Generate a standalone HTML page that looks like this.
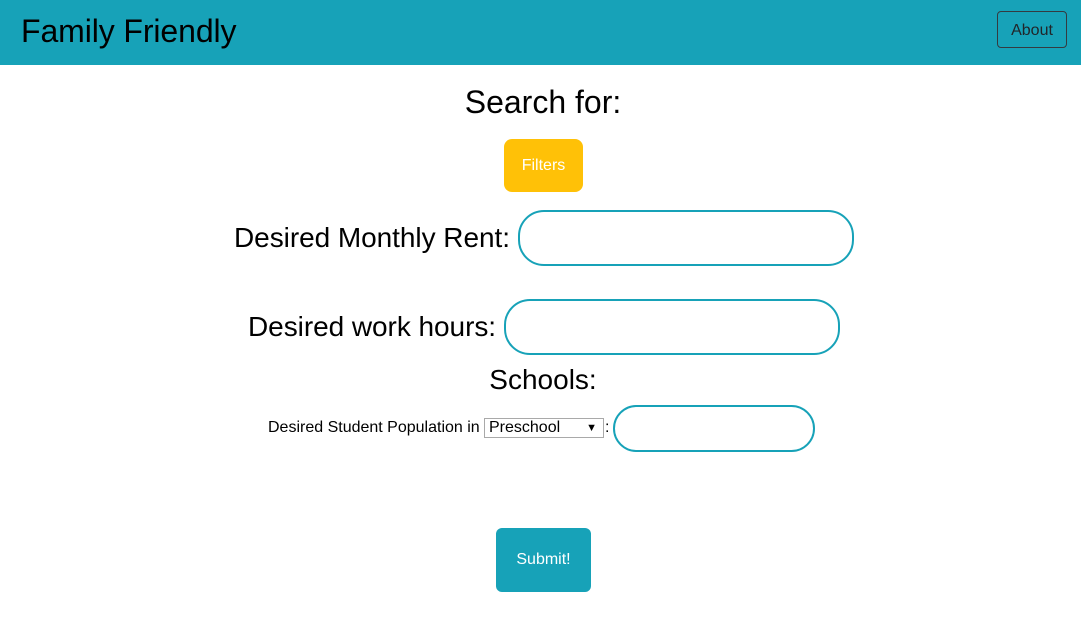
<!DOCTYPE html>
<html><head><style>
body{margin:0;width:1081px;height:639px;background:#fff;font-family:"Liberation Sans",Arial,sans-serif;position:relative;overflow:hidden}
.a{position:absolute;white-space:nowrap}
.hdr{left:0;top:0;width:1081px;height:65px;background:#17a2b8}
.inp{position:absolute;border:2px solid #17a2b8;box-sizing:border-box;background:#fff}
</style></head><body>
<div class="a hdr"></div>
<div class="a" style="left:21px;top:12px;font-size:32px;line-height:38px;color:#000;letter-spacing:-0.1px">Family Friendly</div>
<div class="a" style="left:997px;top:11px;width:70px;height:37px;box-sizing:border-box;border:1px solid #343a40;border-radius:4px;font-size:16px;line-height:38px;text-align:center;color:#212529">About</div>
<div class="a" style="left:0;width:1086px;top:83px;text-align:center;font-size:32px;line-height:38px">Search for:</div>
<div class="a" style="left:504px;top:139px;width:79px;height:53px;background:#ffc107;border-radius:8px;color:#fff;font-size:16px;line-height:53px;text-align:center">Filters</div>
<div class="a" style="left:234px;top:221px;font-size:28px;line-height:34px;letter-spacing:-0.05px">Desired Monthly Rent:</div>
<div class="inp" style="left:518px;top:210px;width:336px;height:56px;border-radius:26px"></div>
<div class="a" style="left:248px;top:310px;font-size:28px;line-height:34px;letter-spacing:-0.05px">Desired work hours:</div>
<div class="inp" style="left:504px;top:299px;width:336px;height:56px;border-radius:26px"></div>
<div class="a" style="left:0;width:1086px;top:363px;text-align:center;font-size:28px;line-height:34px">Schools:</div>
<div class="a" style="left:268px;top:418px;font-size:16px;line-height:19px">Desired Student Population in</div>
<div class="a" style="left:484px;top:418px;width:120px;height:20px;box-sizing:border-box;border:1px solid #a9a9a9;font-size:16px;line-height:18px;padding-left:4px">Preschool<span style="position:absolute;right:6px;top:0;font-size:11px">▼</span></div>
<div class="a" style="left:605px;top:418px;font-size:16px;line-height:19px">:</div>
<div class="inp" style="left:613px;top:405px;width:202px;height:47px;border-radius:24px"></div>
<div class="a" style="left:496px;top:528px;width:95px;height:64px;background:#17a2b8;border-radius:6px;color:#fff;font-size:16px;line-height:64px;text-align:center">Submit!</div>
</body></html>
